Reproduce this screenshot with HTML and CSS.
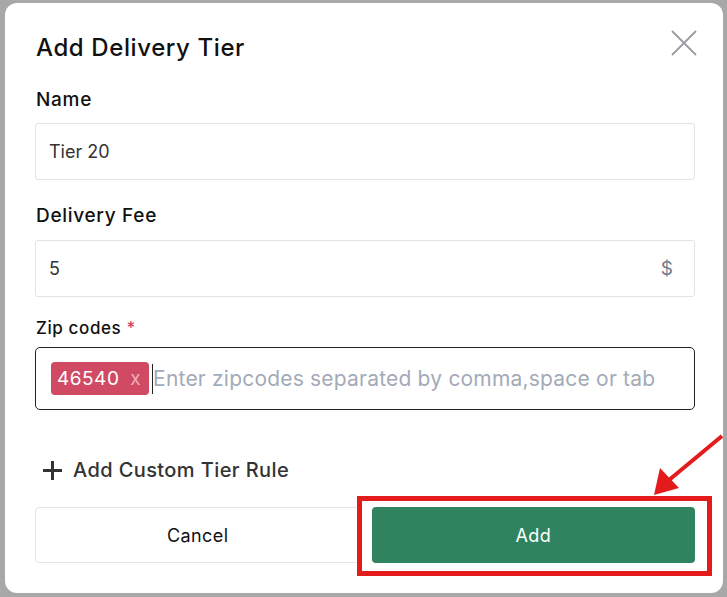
FILE: index.html
```html
<!doctype html>
<html lang="en">
<head>
    <meta charset="UTF-8">
    <meta name="viewport" content="width=device-width, initial-scale=1.0">
    <title>Add Delivery Tier</title>
    <link rel="stylesheet" href="styles.css">
</head>
<body>
    <div class="modal">
        <div class="modal-head">
            <h1>Add Delivery Tier</h1>
            <button class="close" aria-label="Close">
                <svg width="26" height="26" viewBox="0 0 26 26">
                    <path d="M1 1 L25 25 M25 1 L1 25" stroke="#9b9ba3" stroke-width="1.8" fill="none"/>
                </svg>
            </button>
        </div>

        <label class="field-label">Name</label>
        <div class="input"><span class="value">Tier 20</span></div>

        <label class="field-label fee">Delivery Fee</label>
        <div class="input"><span class="value">5</span><span class="suffix">$</span></div>

        <label class="field-label zip">Zip codes <span class="req">*</span></label>
        <div class="input tags">
            <span class="chip">46540 <span class="chip-x">x</span></span>
            <span class="caret"></span>
            <span class="placeholder">Enter zipcodes separated by comma,space or tab</span>
        </div>

        <div class="custom-rule">
            <svg class="plus" width="19" height="19" viewBox="0 0 19 19">
                <path d="M9.5 0 V19 M0 9.5 H19" stroke="#333" stroke-width="3" fill="none"/>
            </svg>
            Add Custom Tier Rule
        </div>

        <div class="actions">
            <button class="btn cancel">Cancel</button>
            <button class="btn add">Add</button>
        </div>

        <div class="highlight"></div>
        <svg class="arrow" width="80" height="70" viewBox="0 0 80 70">
            <path d="M77 3 L18 52" stroke="#e31b1b" stroke-width="4" fill="none"/>
            <path d="M9 62 L15 35 L34 55 Z" fill="#e31b1b"/>
        </svg>
    </div>
</body>
</html>
```

FILE: styles.css
```css
body {
    margin: 0;
    background: #a8a8a8;
    font-family: Inter, "Open Sans", sans-serif;
    color: #111;
}
.modal {
    position: relative;
    box-sizing: border-box;
    width: 718px;
    height: 590px;
    margin: 3px 0 0 5px;
    padding: 0 28px 0 30px;
    background: #fff;
    border-radius: 12px;
}
.modal-head {
    display: flex;
    justify-content: space-between;
    align-items: center;
    height: 86px;
    padding-top: 2px;
    box-sizing: border-box;
}
h1 {
    margin: 0;
    font-size: 24px;
    font-weight: 500;
    letter-spacing: 0.6px;
    padding-left: 1px;
}
.close {
    border: none;
    background: none;
    padding: 0;
    margin-right: -2px;
    margin-top: -8px;
    width: 26px;
    height: 26px;
}
.field-label {
    display: block;
    font-size: 19px;
    font-weight: 500;
    letter-spacing: 0.7px;
    margin: 0 0 12px 1px;
    line-height: 22px;
}
.fee {
    margin-top: 25px;
    margin-bottom: 13px;
}
.zip {
    margin-top: 20px;
    font-size: 17px;
    letter-spacing: 0.6px;
    margin-bottom: 8px;
}
.req {
    color: #d9455f;
}
.input {
    box-sizing: border-box;
    height: 57px;
    border: 1px solid #e3e3e3;
    border-radius: 3px;
    display: flex;
    align-items: center;
    padding: 0 21px 0 13px;
    font-size: 18px;
    color: #333;
}
.value {
    flex: 1;
}
.suffix {
    color: #6e7c8c;
    font-size: 19px;
}
.tags {
    height: 63px;
    border: 1px solid #222;
    border-radius: 5px;
    padding-left: 15px;
}
.chip {
    background: #d14a64;
    color: #fff;
    border-radius: 4px;
    height: 33px;
    line-height: 33px;
    padding: 0 8px 0 6px;
    font-size: 19px;
    letter-spacing: 0.5px;
}
.chip-x {
    color: #f0aab8;
    margin-left: 5px;
}
.caret {
    width: 1px;
    height: 30px;
    background: #222;
    margin-left: 3px;
}
.placeholder {
    color: #a3aab8;
    font-size: 21px;
    letter-spacing: 0.2px;
}
.custom-rule {
    margin-top: 49px;
    margin-left: 8px;
    font-size: 20px;
    font-weight: 500;
    letter-spacing: 0.4px;
    line-height: 22px;
    color: #333;
    display: flex;
    align-items: center;
}
.plus {
    margin-right: 11px;
}
.actions {
    display: flex;
    gap: 11px;
    margin-top: 26px;
}
.btn {
    flex: 1;
    height: 56px;
    border-radius: 4px;
    font-family: inherit;
    font-size: 18px;
    font-weight: 400;
    letter-spacing: 0.4px;
}
.cancel {
    background: #fff;
    border: 1px solid #e3e3e3;
    color: #111;
}
.add {
    background: #2f835f;
    border: none;
    color: #fff;
}
.highlight {
    position: absolute;
    left: 352px;
    top: 493px;
    width: 355px;
    height: 80px;
    box-sizing: border-box;
    border: 5px solid #e31b1b;
}
.arrow {
    position: absolute;
    left: 640px;
    top: 430px;
}
```
